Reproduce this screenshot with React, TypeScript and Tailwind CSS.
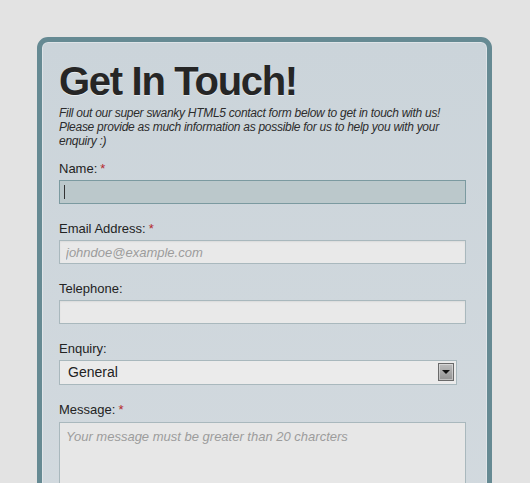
const font = { fontFamily: '"Liberation Sans", Arial, sans-serif' };

function Label({ text, required }: { text: string; required?: boolean }) {
  return (
    <label className="block h-[16px] text-[13px] leading-[16px] text-[#232323]">
      {text}
      {required && <span className="ml-[3px] text-[#b4282c]">*</span>}
    </label>
  );
}

export default function App() {
  return (
    <div
      className="h-screen overflow-hidden bg-[#e3e3e3] pt-[37px] pl-[37px]"
      style={font}
    >
      <div className="w-[455px] rounded-[11px] border-[5px] border-[#668a93] bg-gradient-to-b from-[#cbd4da] to-[#d3dadf] px-[17px] pt-[19px] pb-6 shadow-[inset_0_0_0_1px_rgba(255,255,255,0.35)]">
        <h1 className="text-[40px] font-bold leading-[40px] tracking-[-1.3px] text-[#262626] [text-shadow:0_1px_0_rgba(255,255,255,0.5)]">
          Get In Touch!
        </h1>
        <p className="mt-[5px] w-[407px] text-[12px] italic leading-[14px] tracking-[-0.28px] text-[#2c2c2c]">
          Fill out our super swanky HTML5 contact form below to get in touch with
          us! Please provide as much information as possible for us to help you
          with your enquiry :)
        </p>

        <form className="mt-[13px] flex flex-col">
          <Label text="Name:" required />
          <div className="relative mt-[3px] mb-[17px]">
            <input
              type="text"
              className="block h-[24px] w-[407px] border border-[#7b9aa0] bg-[#bbc8cb] px-[6px] text-[13px] outline-none"
            />
            <span className="absolute left-[5px] top-[5px] h-[14px] w-px bg-[#333]" />
          </div>

          <Label text="Email Address:" required />
          <input
            type="email"
            placeholder="johndoe@example.com"
            className="mt-[3px] mb-[17px] block h-[24px] w-[407px] border border-[#a9b8bd] bg-[#e9e9e9] px-[6px] text-[13px] outline-none shadow-[inset_0_1px_2px_rgba(0,0,0,0.06)] placeholder:italic placeholder:text-[#9c9c9c]"
          />

          <Label text="Telephone:" />
          <input
            type="tel"
            className="mt-[3px] mb-[17px] block h-[24px] w-[407px] border border-[#a9b8bd] bg-[#e9e9e9] px-[6px] text-[13px] outline-none shadow-[inset_0_1px_2px_rgba(0,0,0,0.06)]"
          />

          <Label text="Enquiry:" />
          <div className="relative mt-[3px] mb-[17px] w-[398px]">
            <select className="block h-[25px] w-full appearance-none border border-[#a9b8bd] bg-[#ebebeb] pl-[8px] text-[14px] text-[#222] outline-none">
              <option>General</option>
              <option>Support</option>
              <option>Sales</option>
            </select>
            <span className="pointer-events-none absolute right-[3px] top-[3px] flex h-[18px] w-[16px] items-center justify-center border border-[#6a6a6a] bg-gradient-to-b from-[#bdbdbd] to-[#939393] shadow-[inset_0_0_0_1px_rgba(255,255,255,0.4)]">
              <span className="h-0 w-0 border-x-[4px] border-t-[4px] border-x-transparent border-t-[#111]" />
            </span>
          </div>

          <Label text="Message:" required />
          <textarea
            placeholder="Your message must be greater than 20 charcters"
            className="mt-[4px] block h-[120px] w-[407px] resize-none border border-[#a9b8bd] bg-[#e7e7e7] px-[6px] py-[4px] text-[13px] outline-none placeholder:italic placeholder:text-[#9c9c9c]"
          />
        </form>
      </div>
    </div>
  );
}
